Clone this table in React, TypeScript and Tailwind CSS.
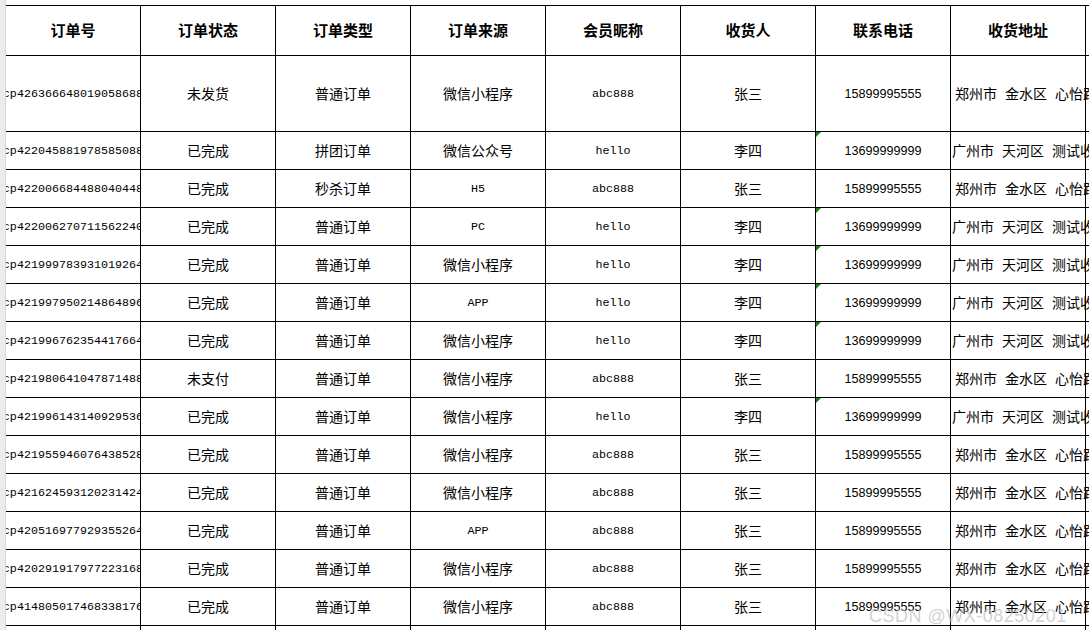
import React from "react";

type Row = {
  id: string;
  status: string;
  type: string;
  source: string;
  nick: string;
  name: string;
  phone: string;
  gz: boolean;
};

const rows: Row[] = [
  { id: "cp426366648019058688", status: "未发货", type: "普通订单", source: "微信小程序", nick: "abc888", name: "张三", phone: "15899995555", gz: false },
  { id: "cp422045881978585088", status: "已完成", type: "拼团订单", source: "微信公众号", nick: "hello", name: "李四", phone: "13699999999", gz: true },
  { id: "cp422006684488040448", status: "已完成", type: "秒杀订单", source: "H5", nick: "abc888", name: "张三", phone: "15899995555", gz: false },
  { id: "cp422006270711562240", status: "已完成", type: "普通订单", source: "PC", nick: "hello", name: "李四", phone: "13699999999", gz: true },
  { id: "cp421999783931019264", status: "已完成", type: "普通订单", source: "微信小程序", nick: "hello", name: "李四", phone: "13699999999", gz: true },
  { id: "cp421997950214864896", status: "已完成", type: "普通订单", source: "APP", nick: "hello", name: "李四", phone: "13699999999", gz: true },
  { id: "cp421996762354417664", status: "已完成", type: "普通订单", source: "微信小程序", nick: "hello", name: "李四", phone: "13699999999", gz: true },
  { id: "cp421980641047871488", status: "未支付", type: "普通订单", source: "微信小程序", nick: "abc888", name: "张三", phone: "15899995555", gz: false },
  { id: "cp421996143140929536", status: "已完成", type: "普通订单", source: "微信小程序", nick: "hello", name: "李四", phone: "13699999999", gz: true },
  { id: "cp421955946076438528", status: "已完成", type: "普通订单", source: "微信小程序", nick: "abc888", name: "张三", phone: "15899995555", gz: false },
  { id: "cp421624593120231424", status: "已完成", type: "普通订单", source: "微信小程序", nick: "abc888", name: "张三", phone: "15899995555", gz: false },
  { id: "cp420516977929355264", status: "已完成", type: "普通订单", source: "APP", nick: "abc888", name: "张三", phone: "15899995555", gz: false },
  { id: "cp420291917977223168", status: "已完成", type: "普通订单", source: "微信小程序", nick: "abc888", name: "张三", phone: "15899995555", gz: false },
  { id: "cp414805017468338176", status: "已完成", type: "普通订单", source: "微信小程序", nick: "abc888", name: "张三", phone: "15899995555", gz: false },
];

const cjk = "font-['Noto_Sans_CJK_SC','Noto_Sans',sans-serif]";
const mono = "font-['Liberation_Mono','Noto_Sans_CJK_SC',monospace]";
const sans = "font-['Liberation_Sans','Noto_Sans_CJK_SC',sans-serif]";

const isAscii = (s: string) => /^[A-Za-z0-9]+$/.test(s);

function Cell({ children, className = "" }: { children?: React.ReactNode; className?: string }) {
  return (
    <div className={`relative w-[135px] shrink-0 border-r border-black flex items-center justify-center overflow-hidden whitespace-nowrap ${className}`}>
      {children}
    </div>
  );
}

const headers = ["订单号", "订单状态", "订单类型", "订单来源", "会员昵称", "收货人", "联系电话", "收货地址"];

export default function App() {
  return (
    <div className="relative flex w-[1089px] h-[630px] overflow-hidden bg-white text-black antialiased">
      <div className="w-[6px] shrink-0 h-full bg-[#ececec] border-r border-[#d4d4d4]" />
      <div className="flex-1 pt-[5px] flex flex-col">
        <div className="flex h-[51px] shrink-0 border-t border-b border-black">
          {headers.map((h) => (
            <Cell key={h} className={`${cjk} text-[15px] font-bold`}>
              {h}
            </Cell>
          ))}
          <div className="flex-1" />
        </div>
        {rows.map((r, i) => {
          const zz = r.phone.startsWith("158");
          return (
            <div key={i} className={`flex shrink-0 border-b border-black ${i === 0 ? "h-[76px]" : "h-[38px]"}`}>
              <Cell className={`${mono} text-[11.7px] pt-[2px]`}>{r.id}</Cell>
              <Cell className={`${cjk} text-[14px]`}>{r.status}</Cell>
              <Cell className={`${cjk} text-[14px]`}>{r.type}</Cell>
              <Cell className={isAscii(r.source) ? `${mono} text-[11.7px] pt-[2px]` : `${cjk} text-[14px]`}>{r.source}</Cell>
              <Cell className={`${mono} text-[11.7px] pt-[2px]`}>{r.nick}</Cell>
              <Cell className={`${cjk} text-[14px]`}>{r.name}</Cell>
              <Cell className={`${sans} text-[12.6px] pt-[2px]`}>
                {r.gz && (
                  <span className="absolute top-0 left-0 w-0 h-0 border-t-[5px] border-t-[#1e7a1e] border-r-[5px] border-r-transparent" />
                )}
                {r.phone}
              </Cell>
              <div className={`relative w-[135px] shrink-0 border-r border-black flex items-center whitespace-nowrap ${cjk} text-[14px] ${zz ? "pl-[4px]" : "pl-[1px]"}`}>
                <span className="flex gap-[8px] text-black">
                  {zz ? (
                    <>
                      <span>郑州市</span>
                      <span>金水区</span>
                      <span>心怡路88号</span>
                    </>
                  ) : (
                    <>
                      <span>广州市</span>
                      <span>天河区</span>
                      <span>测试收货地址</span>
                    </>
                  )}
                </span>
              </div>
              <div className="flex-1" />
            </div>
          );
        })}
        <div className="flex h-[38px] shrink-0">
          {headers.map((h) => (
            <Cell key={h} />
          ))}
        </div>
      </div>
      <div className={`absolute left-[869px] top-[603px] text-[18px] ${sans} text-[rgba(190,190,190,0.7)] whitespace-nowrap tracking-[0.5px]`}>
        CSDN @WX-08250201
      </div>
    </div>
  );
}
